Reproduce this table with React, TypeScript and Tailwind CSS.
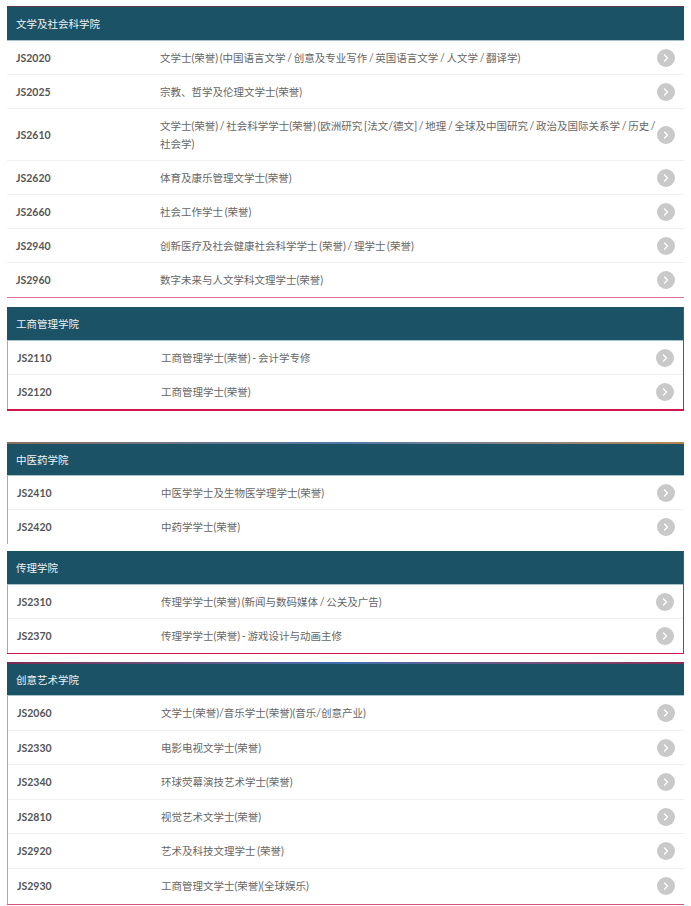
import { FC } from 'react';

interface Course {
  code: string;
  name: string;
}

interface Props {
  title: string;
  courses: Course[];
  wrapClass?: string;
  rowsClass?: string;
  strip?: string;
}

const faculties: { title: string; courses: Course[] }[] = [
  {
    title: '文学及社会科学院',
    courses: [
      { code: 'JS2020', name: '文学士(荣誉) (中国语言文学 / 创意及专业写作 / 英国语言文学 / 人文学 / 翻译学)' },
      { code: 'JS2025', name: '宗教、哲学及伦理文学士(荣誉)' },
      { code: 'JS2610', name: '文学士(荣誉) / 社会科学学士(荣誉) (欧洲研究 [法文/德文] / 地理 / 全球及中国研究 / 政治及国际关系学 / 历史 / 社会学)' },
      { code: 'JS2620', name: '体育及康乐管理文学士(荣誉)' },
      { code: 'JS2660', name: '社会工作学士 (荣誉)' },
      { code: 'JS2940', name: '创新医疗及社会健康社会科学学士 (荣誉) / 理学士 (荣誉)' },
      { code: 'JS2960', name: '数字未来与人文学科文理学士(荣誉)' },
    ],
  },
  {
    title: '工商管理学院',
    courses: [
      { code: 'JS2110', name: '工商管理学士(荣誉) - 会计学专修' },
      { code: 'JS2120', name: '工商管理学士(荣誉)' },
    ],
  },
  {
    title: '中医药学院',
    courses: [
      { code: 'JS2410', name: '中医学学士及生物医学理学士(荣誉)' },
      { code: 'JS2420', name: '中药学学士(荣誉)' },
    ],
  },
  {
    title: '传理学院',
    courses: [
      { code: 'JS2310', name: '传理学学士(荣誉) (新闻与数码媒体 / 公关及广告)' },
      { code: 'JS2370', name: '传理学学士(荣誉) - 游戏设计与动画主修' },
    ],
  },
  {
    title: '创意艺术学院',
    courses: [
      { code: 'JS2060', name: '文学士(荣誉)/音乐学士(荣誉)(音乐/创意产业)' },
      { code: 'JS2330', name: '电影电视文学士(荣誉)' },
      { code: 'JS2340', name: '环球荧幕演技艺术学士(荣誉)' },
      { code: 'JS2810', name: '视觉艺术文学士(荣誉)' },
      { code: 'JS2920', name: '艺术及科技文理学士 (荣誉)' },
      { code: 'JS2930', name: '工商管理文学士(荣誉)(全球娱乐)' },
    ],
  },
];

const Arrow = () => (
  <span className="flex h-[18px] w-[18px] shrink-0 items-center justify-center rounded-full bg-[#c9c9c9]">
    <svg width="6" height="8" viewBox="0 0 6 8" fill="none">
      <path d="M1.5 1 L4.5 4 L1.5 7" stroke="#ffffff" strokeWidth="1.3" strokeLinecap="round" strokeLinejoin="round" />
    </svg>
  </span>
);

const Faculty: FC<Props> = (props) => {
  return (
    <div className={props.wrapClass}>
      {props.strip && <div className={'h-[2px] ' + props.strip} />}
      <div className={'flex items-center bg-[#1b5265] pl-[9px] text-[10.5px] leading-[18px] text-[#eef3f5] border-b border-[#a9c3cb] ' + (props.strip ? 'h-[32px]' : 'h-[34px]')}>
        {props.title}
      </div>
      <div className={props.rowsClass}>
        {props.courses.map((c, i) => (
          <div
            key={c.code}
            className={'flex items-center pt-[8px] pb-[7px] pl-[9px] pr-[9px] text-[10.5px] leading-[18px] ' + (i < props.courses.length - 1 ? 'border-b border-[#f1f1f1]' : 'border-b border-transparent')}
          >
            <div className="h-[18px] w-[144px] shrink-0 font-bold text-[#555555]">{c.code}</div>
            <div className="flex-1 text-[#666666] [word-spacing:-1px]">{c.name}</div>
            <Arrow />
          </div>
        ))}
      </div>
    </div>
  );
};

export default function App() {
  return (
    <div className="min-h-[906px] w-[691px] bg-white pt-[6px] font-['Lato','Noto_Sans_CJK_SC',sans-serif]">
      <Faculty
        title={faculties[0].title}
        courses={faculties[0].courses}
        wrapClass="mx-[7px] border-t border-b border-t-[#5b3b45] border-b-[#e0709a]"
      />
      <Faculty
        title={faculties[1].title}
        courses={faculties[1].courses}
        wrapClass="mx-[7px] mt-[9px] border-r border-r-[#cf1f50] border-b-2 border-b-[#d0164c]"
        rowsClass="border-l border-l-[#e58aa5]"
      />
      <Faculty
        title={faculties[2].title}
        courses={faculties[2].courses}
        wrapClass="mx-[7px] mt-[31px]"
        rowsClass="border-l border-l-[#e58aa5]"
        strip="bg-linear-to-r from-[#8a6f5f] via-[#4f78a8] to-[#b9854f]"
      />
      <Faculty
        title={faculties[3].title}
        courses={faculties[3].courses}
        wrapClass="mx-[7px] mt-[7px] border-r border-r-[#cf1f50] border-b border-b-[#d0164c]"
        rowsClass="border-l border-l-[#e58aa5]"
      />
      <Faculty
        title={faculties[4].title}
        courses={faculties[4].courses}
        wrapClass="mx-[7px] mt-[8px] border-b border-b-[#d9507a]"
        rowsClass="border-l border-l-[#e58aa5] [&>div]:pb-[7.6px]"
        strip="bg-linear-to-r from-[#7d2a52] via-[#3d6fb0] to-[#8b2a55]"
      />
    </div>
  );
}
